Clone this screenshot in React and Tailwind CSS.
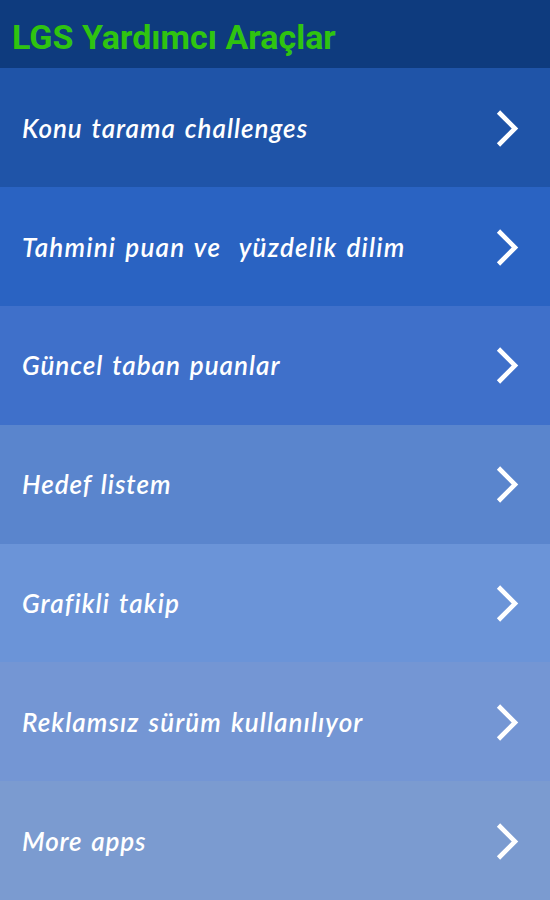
import React from 'react';

const menuItems = [
  { label: 'Konu tarama challenges', bg: 'bg-[#1f54a8]', tracking: 'tracking-[1px]' },
  { label: 'Tahmini puan ve  yüzdelik dilim', bg: 'bg-[#2a63c2]', tracking: 'tracking-[1.22px]' },
  { label: 'Güncel taban puanlar', bg: 'bg-[#3f70ca]', tracking: 'tracking-[1px]' },
  { label: 'Hedef listem', bg: 'bg-[#5a85cd]', tracking: 'tracking-[0.95px]' },
  { label: 'Grafikli takip', bg: 'bg-[#6b94d8]', tracking: 'tracking-[1.15px]' },
  { label: 'Reklamsız sürüm kullanılıyor', bg: 'bg-[#7496d4]', tracking: 'tracking-[1.1px]' },
  { label: 'More apps', bg: 'bg-[#7b9bd0]', tracking: 'tracking-[0.85px]' },
];

const Chevron = () => (
  <svg className="h-10 w-6 shrink-0" viewBox="0 0 24 40" fill="none" stroke="white" strokeWidth="4.6">
    <path d="M2.5 4L19 20.5L2.5 37" />
  </svg>
);

const MenuRow = ({ label, bg, tracking }) => (
  <button className={`flex w-full flex-1 items-center justify-between pl-[22px] pr-[30px] ${bg}`}>
    <span className={`whitespace-pre pt-px font-['Lato',sans-serif] text-[26px] font-semibold italic text-white [word-spacing:2px] ${tracking}`}>
      {label}
    </span>
    <Chevron />
  </button>
);

const App = () => {
  return (
    <div className="flex h-[900px] w-full flex-col overflow-hidden">
      <header className="flex h-[68.4px] shrink-0 items-center bg-[#0e3b7e] pl-3 pt-1.5">
        <h1 className="font-['Roboto',sans-serif] text-[34px] font-bold text-[#2fc410]">LGS Yardımcı Araçlar</h1>
      </header>
      {menuItems.map((item) => (
        <MenuRow key={item.label} {...item} />
      ))}
    </div>
  );
};

export default App;
